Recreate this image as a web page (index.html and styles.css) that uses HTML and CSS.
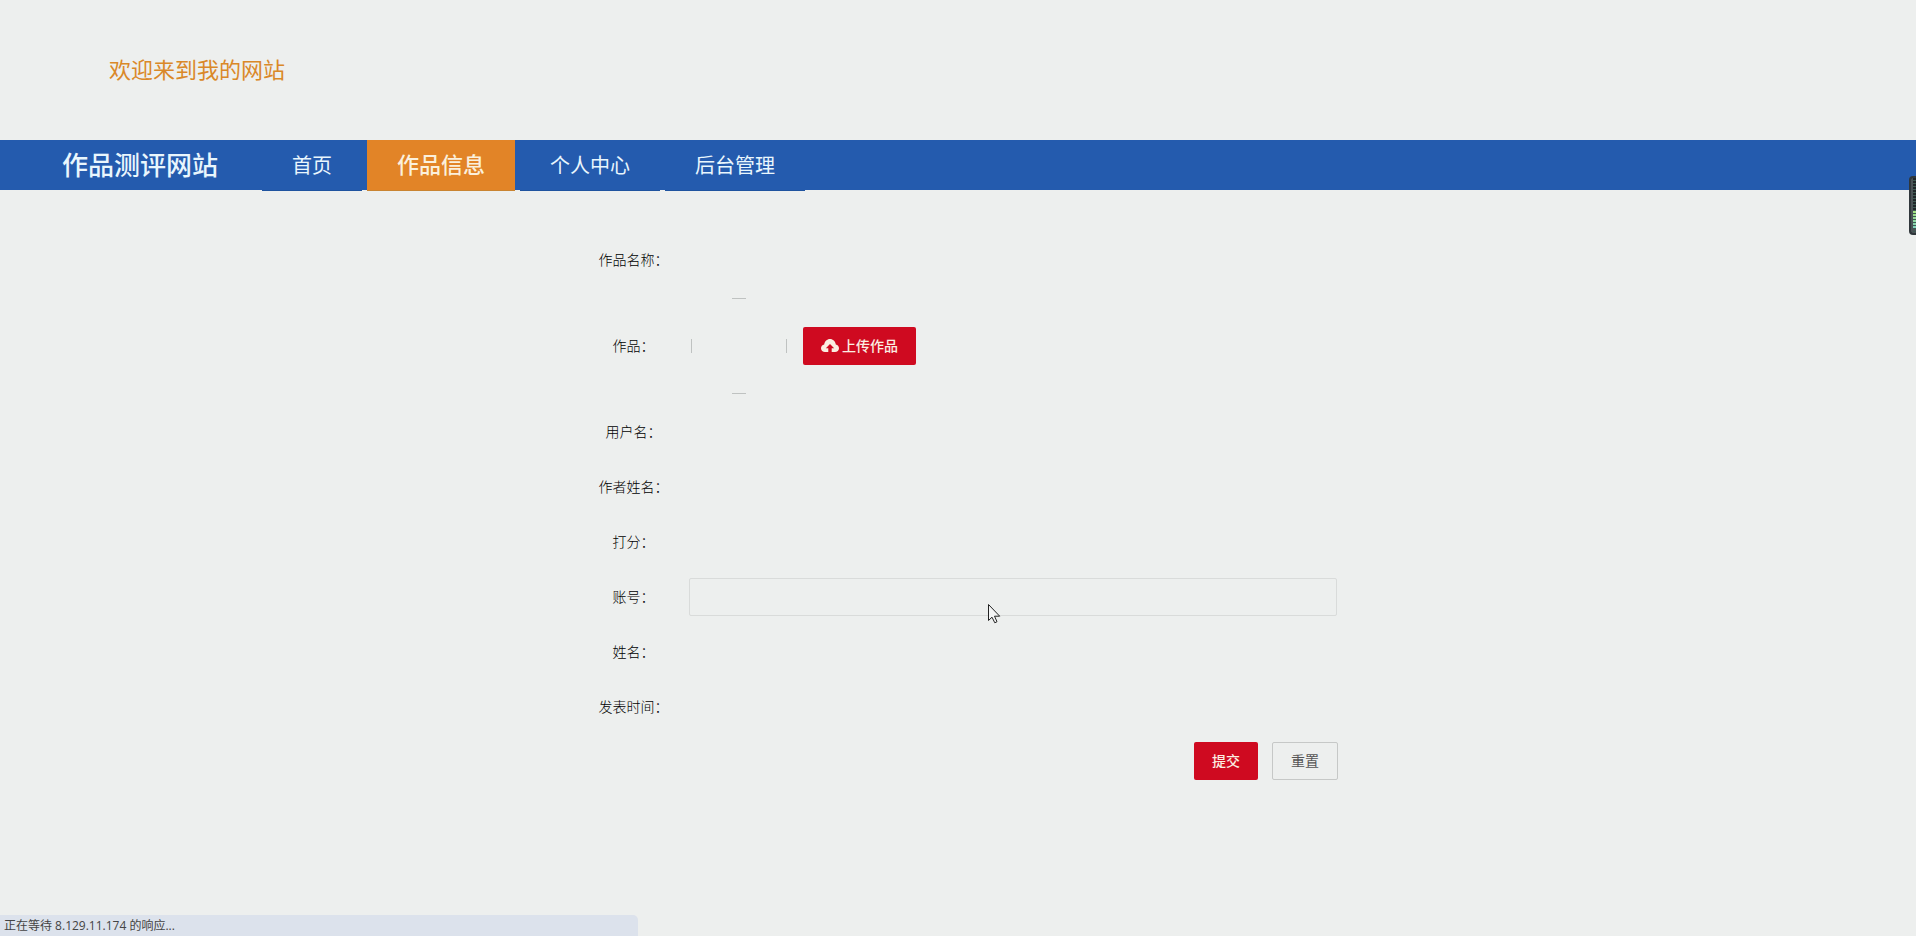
FILE: index.html
```html
<!DOCTYPE html>
<html lang="zh-CN">
<head>
<meta charset="utf-8">
<title>作品测评网站</title>
<link rel="stylesheet" href="styles.css">
</head>
<body>
<header class="banner">欢迎来到我的网站</header>
<nav class="nav">
  <span class="brand">作品测评网站</span>
  <ul class="menu">
    <li><a class="menu-link" href="#">首页</a></li>
    <li><a class="menu-link active" href="#">作品信息</a></li>
    <li><a class="menu-link" href="#">个人中心</a></li>
    <li><a class="menu-link" href="#">后台管理</a></li>
  </ul>
</nav>
<main class="content">
  <form class="form">
    <div class="row">
      <label class="label" for="title">作品名称：</label>
      <input class="input" id="title" type="text">
    </div>
    <div class="row row-upload">
      <label class="label" for="upload">作品：</label>
      <div class="upload">
        <svg class="preview" viewBox="0 0 96 96" aria-hidden="true">
          <path d="M41 .5h14M41 95.5h14M.5 41v14M95.5 41v14" stroke="#bfc2c1" fill="none"/>
        </svg>
        <button class="btn btn-primary" id="upload" type="button">
          <svg class="cloud" viewBox="0 0 18 13" aria-hidden="true">
            <path d="M4 13C1.700 13 0 11.400 0 9.300C0 7.300 1.300 5.800 3.200 5.400C3.700 2.300 6 0 9 0C12 0 14.300 2.300 14.800 5.400C16.700 5.800 18 7.300 18 9.300C18 11.400 16.300 13 14 13H10.700V9.200H13.200L9 5L4.800 9.200H7.300V13Z" fill="#fbeee2"/>
          </svg>
          <span>上传作品</span>
        </button>
      </div>
    </div>
    <div class="row">
      <label class="label" for="username">用户名：</label>
      <input class="input" id="username" type="text">
    </div>
    <div class="row">
      <label class="label" for="author">作者姓名：</label>
      <input class="input" id="author" type="text">
    </div>
    <div class="row">
      <label class="label" for="score">打分：</label>
      <input class="input" id="score" type="text">
    </div>
    <div class="row">
      <label class="label" for="account">账号：</label>
      <input class="input hovered" id="account" type="text">
    </div>
    <div class="row">
      <label class="label" for="name">姓名：</label>
      <input class="input" id="name" type="text">
    </div>
    <div class="row">
      <label class="label" for="time">发表时间：</label>
      <input class="input" id="time" type="text">
    </div>
    <div class="actions">
      <button class="btn btn-primary" type="submit">提交</button>
      <button class="btn btn-plain" type="reset">重置</button>
    </div>
  </form>
</main>
<div class="meter"></div>
<svg class="cursor" viewBox="0 0 13 20" aria-hidden="true">
  <path d="M.5 .5V16.500L4 13.200L6.800 18.800L9 17.700L6.500 12.200H11.700Z" fill="#f4f5f5" stroke="#222"/>
</svg>
<div class="status">正在等待 8.129.11.174 的响应...</div>
</body>
</html>
```
FILE: styles.css
```css
* {
  box-sizing: border-box;
}

body {
  margin: 0;
  min-height: 100vh;
  background: #edefee;
  color: #222;
  font: 14px/20px "Noto Sans CJK SC", sans-serif;
}

.banner {
  padding: 0 0 4px 109px;
  color: #da8828;
  font-size: 22px;
  line-height: 136px;
}

.nav {
  display: flex;
  gap: 44px;
  height: 50px;
  padding-left: 62px;
  background: #245bae;
  color: #e9f6fd;
}

.brand {
  font-size: 26px;
  font-weight: 500;
  line-height: 48px;
}

.menu {
  display: flex;
  gap: 5px;
  margin: 0;
  padding: 0;
  list-style: none;
}

.menu-link {
  display: block;
  padding: 0 30px;
  border-bottom: 1px solid #1f539f;
  background: #245bae;
  color: #e9f6fd;
  font-size: 20px;
  line-height: 50px;
  text-decoration: none;
}

.menu-link.active {
  padding-bottom: 4px;
  border-color: #c98431;
  background: #e28427;
  color: #fbf0dc;
  font-size: 22px;
  font-weight: 500;
  line-height: 46px;
}

.content {
  padding: 51px 16px;
}

.form {
  display: flex;
  flex-direction: column;
  gap: 17px;
  max-width: 760px;
  margin: 0 auto;
}

.row {
  display: flex;
  align-items: center;
  min-height: 38px;
  padding-right: 1px;
}

.row-upload {
  min-height: 100px;
}

.label {
  flex: 0 0 111px;
  padding-bottom: 2px;
  color: #000;
  font-weight: 300;
  text-align: center;
}

.input {
  flex: 1;
  min-width: 0;
  height: 38px;
  padding: 0 10px;
  border: 1px solid transparent;
  border-radius: 2px;
  outline: none;
  background: transparent;
  color: inherit;
  font: inherit;
}

.input.hovered {
  border-color: #d9dbda;
}

.upload {
  display: flex;
  align-items: center;
  gap: 16px;
  padding-left: 2px;
}

.preview {
  width: 96px;
  height: 96px;
}

.btn {
  display: flex;
  align-items: center;
  gap: 3px;
  height: 38px;
  padding: 0 18px 2px;
  border: 0;
  border-radius: 2px;
  font: inherit;
}

.btn-primary {
  background: #cf0a20;
  color: #fbeee2;
  font-weight: 500;
}

.btn-plain {
  border: 1px solid #c6c8c7;
  background: transparent;
  color: #555;
}

.cloud {
  width: 18px;
  height: 13px;
}

.actions {
  display: flex;
  justify-content: flex-end;
  gap: 14px;
  margin-top: -1px;
}

.meter {
  position: fixed;
  top: 176px;
  right: 0;
  width: 7px;
  height: 59px;
  border: 2px solid #30373b;
  border-width: 2px 0 2px 2px;
  border-radius: 4px 0 0 4px;
  background:
    linear-gradient(90deg, #4b5357 2px, transparent 2px),
    repeating-linear-gradient(transparent 0 2px, #3e5a52 2px 3px),
    linear-gradient(#20272a 33px, #a5e27f 33px, #7fd0c0 51px, #4b5357 51px);
}

.cursor {
  position: fixed;
  top: 604px;
  left: 988px;
  width: 13px;
  height: 20px;
}

.status {
  position: fixed;
  bottom: 0;
  left: 0;
  width: 638px;
  max-width: 100%;
  padding-left: 4px;
  border-top-right-radius: 5px;
  background: #dce2ec;
  color: #444;
  font: 12px/21px "Open Sans", "Noto Sans CJK SC", sans-serif;
}
```
